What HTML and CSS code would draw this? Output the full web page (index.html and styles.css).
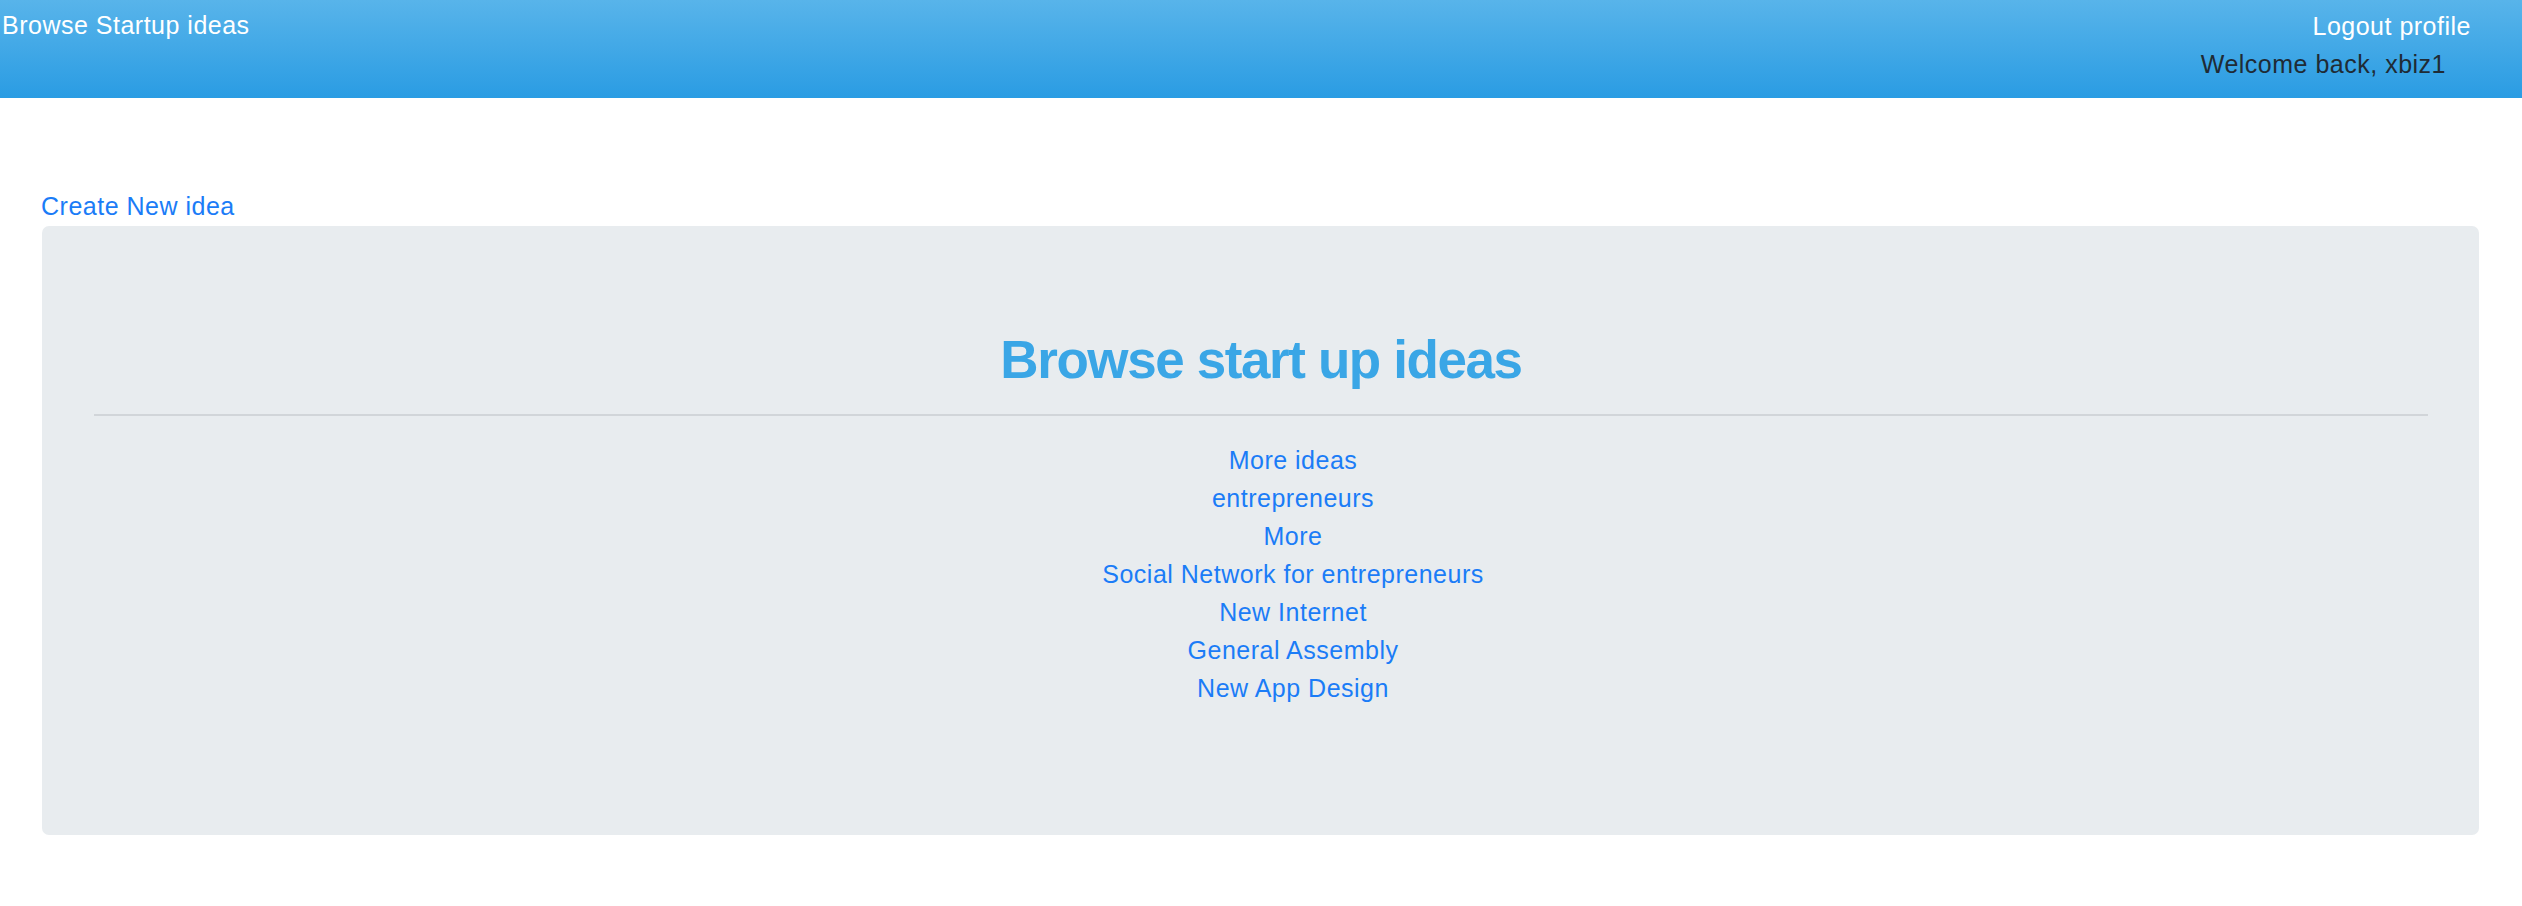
FILE: index.html
```html
<!DOCTYPE html>
<html lang="en">
<head>
<meta charset="utf-8">
<title>Browse Startup ideas</title>
<link rel="stylesheet" href="styles.css">
</head>
<body>
<header class="topbar">
  <a class="brand" href="#">Browse Startup ideas</a>
  <div class="user">
    <a class="logout" href="#">Logout profile</a>
    <span class="welcome">Welcome back, xbiz1</span>
  </div>
</header>
<main class="page">
  <a class="create" href="#">Create New idea</a>
  <section class="jumbo">
    <h1 class="title">Browse start up ideas</h1>
    <hr class="rule">
    <ul class="ideas">
      <li><a href="#">More ideas</a></li>
      <li><a href="#">entrepreneurs</a></li>
      <li><a href="#">More</a></li>
      <li><a href="#">Social Network for entrepreneurs</a></li>
      <li><a href="#">New Internet</a></li>
      <li><a href="#">General Assembly</a></li>
      <li><a href="#">New App Design</a></li>
    </ul>
  </section>
</main>
</body>
</html>
```
FILE: styles.css
```css
html, body {
  margin: 0;
  padding: 0;
  background: #ffffff;
}
body {
  font-family: "Liberation Sans", Arial, sans-serif;
  font-size: 25px;
  letter-spacing: 0.5px;
  line-height: 38px;
  color: #212529;
}
a {
  text-decoration: none;
}
.topbar {
  height: 98px;
  box-sizing: border-box;
  display: flex;
  justify-content: space-between;
  align-items: flex-start;
  background: linear-gradient(to bottom, #58b4ea 0%, #2a9ce3 100%);
}
.brand {
  color: #ffffff;
  padding: 6px 0 0 2px;
}
.user {
  display: flex;
  flex-direction: column;
  align-items: flex-end;
  padding-top: 7px;
}
.logout {
  color: #ffffff;
  margin-right: 51px;
}
.welcome {
  color: #1f2b35;
  margin-right: 76px;
}
.page {
  display: flex;
  flex-direction: column;
  align-items: flex-start;
  padding: 90px 43px 0 41px;
}
.create {
  color: #1b7cf7;
  line-height: 37px;
}
.jumbo {
  align-self: stretch;
  margin: 1px 0 0 1px;
  background: #e8ecef;
  border-radius: 7px;
  padding: 102px 51px 128px 52px;
}
.title {
  margin: 0;
  height: 64px;
  line-height: 64px;
  font-family: "Liberation Sans", Arial, sans-serif;
  font-size: 53px;
  font-weight: bold;
  letter-spacing: -1.4px;
  color: #3aa6e6;
  text-align: center;
}
.rule {
  margin: 22px 0 0 0;
  border: 0;
  height: 2px;
  background: #d1d5d9;
}
.ideas {
  list-style: none;
  margin: 25px 0 0 0;
  padding: 0 0 0 64px;
  text-align: center;
}
.ideas a {
  color: #1b7cf7;
}
```
